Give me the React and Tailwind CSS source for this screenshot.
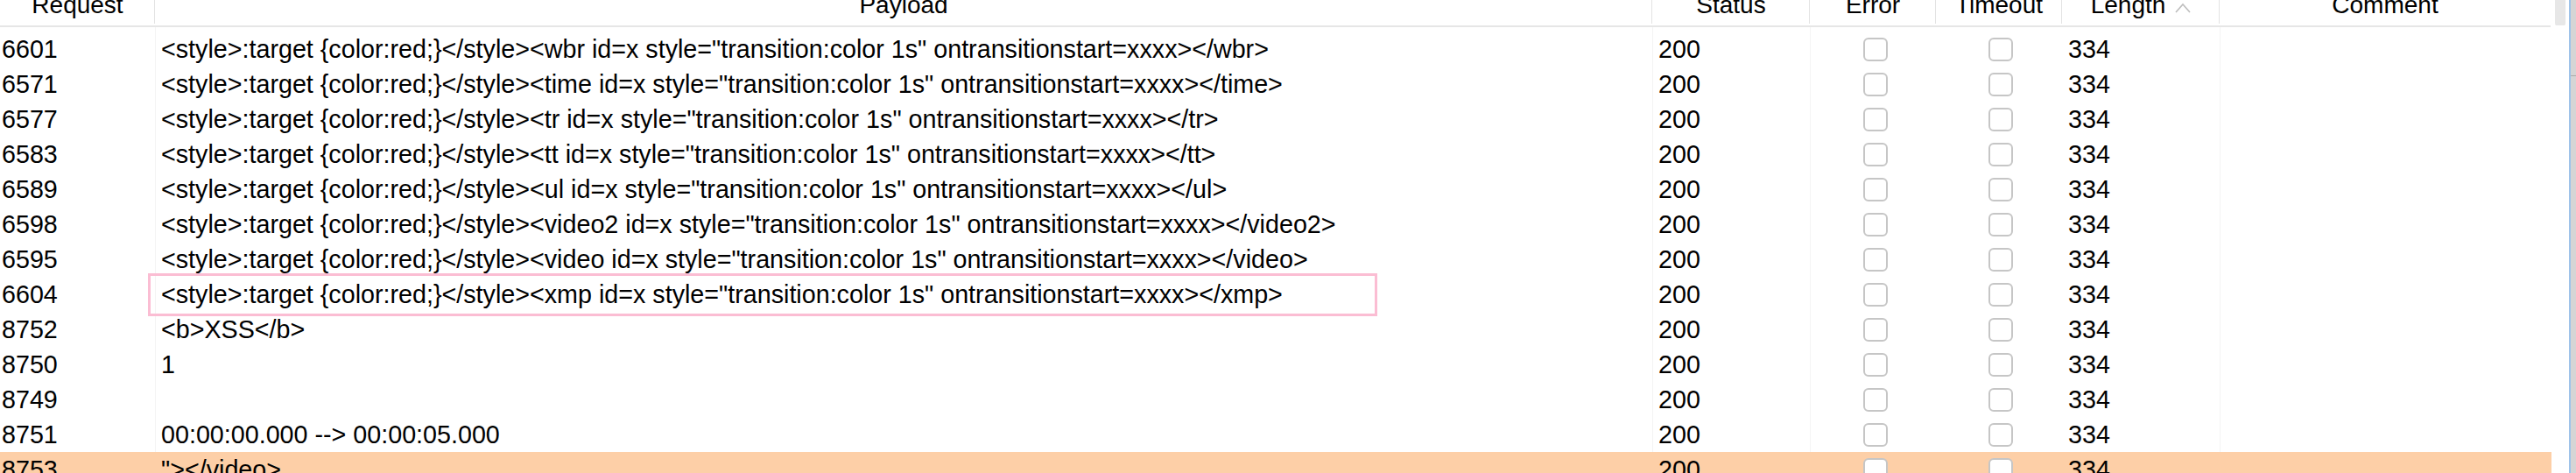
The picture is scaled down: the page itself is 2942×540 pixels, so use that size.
import React from "react";

const P = (tag) =>
  `<style>:target {color:red;}</style><${tag} id=x style="transition:color 1s" ontransitionstart=xxxx></${tag}>`;

const rows = [
  ["6601", P("wbr")],
  ["6571", P("time")],
  ["6577", P("tr")],
  ["6583", P("tt")],
  ["6589", P("ul")],
  ["6598", P("video2")],
  ["6595", P("video")],
  ["6604", P("xmp")],
  ["8752", "<b>XSS</b>"],
  ["8750", "1"],
  ["8749", ""],
  ["8751", "00:00:00.000 --> 00:00:05.000"],
  ["8753", '"></video>'],
];

function Box() {
  return (
    <div className="w-[28px] h-[27px] rounded-[6px] border-2 border-[#c6c6c6] bg-white" />
  );
}

function HeadCell({ w, children, last }) {
  return (
    <div className={`${w} h-[29px] relative flex justify-center shrink-0`}>
      <div className="-mt-[8px] leading-[28px] flex items-start">{children}</div>
      {!last && <div className="absolute right-0 top-0 h-[27px] w-px bg-[#e3e3e3]" />}
    </div>
  );
}

export default function App() {
  return (
    <div
      className="w-[2942px] h-[540px] overflow-hidden bg-white flex text-black"
      style={{ fontFamily: '"Liberation Sans", Arial, sans-serif' }}
    >
      <div className="w-[2934px] h-full relative flex flex-col shrink-0">
        {/* header */}
        <div className="flex h-[29px] shrink-0 overflow-hidden text-[28px]">
          <HeadCell w="w-[177px]">Request</HeadCell>
          <HeadCell w="w-[1710px]">Payload</HeadCell>
          <HeadCell w="w-[180px]">Status</HeadCell>
          <HeadCell w="w-[144px]">Error</HeadCell>
          <HeadCell w="w-[144px]">Timeout</HeadCell>
          <HeadCell w="w-[180px]">
            <span>Length</span>
            <svg width="18" height="12" viewBox="0 0 18 12" className="ml-[11px] mt-[11px]" fill="none">
              <polyline points="1,11 9,2 17,11" stroke="#bdbdbd" strokeWidth="1.6" />
            </svg>
          </HeadCell>
          <HeadCell w="w-[378px]" last>Comment</HeadCell>
          <div className="w-[21px] shrink-0 h-[29px]">
            <div className="ml-[5px] w-[12px] h-[32px] rounded-b-full bg-[#e7e7e7] relative z-10" />
          </div>
        </div>
        <div className="w-[2913px] h-[2px] shrink-0 bg-[#e6e6e6]" />
        {/* body */}
        <div className="relative shrink-0 pt-[5px] text-[28.7px]">
          <div className="absolute left-[177px] top-0 bottom-0 w-px bg-[#f4f4f4]" />
          <div className="absolute left-[1887px] top-0 bottom-0 w-px bg-[#f4f4f4]" />
          <div className="absolute left-[2067px] top-0 bottom-0 w-px bg-[#f4f4f4]" />
          <div className="absolute left-[2535px] top-0 bottom-0 w-px bg-[#f4f4f4]" />
          {rows.map(([id, payload], i) => (
            <div
              key={id}
              className={`relative flex h-[40px] shrink-0 items-center w-[2914px] leading-[40px] ${
                i === rows.length - 1 ? "bg-[#fdcfa7]" : ""
              }`}
            >
              <div className="w-[177px] shrink-0 pl-[2px]">{id}</div>
              <div className="w-[1710px] shrink-0 pl-[7px] whitespace-pre overflow-hidden">{payload}</div>
              <div className="w-[180px] shrink-0 pl-[7px]">200</div>
              <div className="w-[144px] shrink-0 flex justify-center pl-[6px]">
                <Box />
              </div>
              <div className="w-[144px] shrink-0 flex justify-center pl-[4px]">
                <Box />
              </div>
              <div className="w-[180px] shrink-0 pl-[7px]">334</div>
              <div className="flex-1" />
            </div>
          ))}
        </div>
        {/* highlight annotation */}
        <div className="absolute left-[169px] top-[312px] w-[1404px] h-[49px] border-[3px] border-[#fbbdd3] pointer-events-none" />
      </div>
      <div className="w-[2px] h-full shrink-0 bg-[#9ec3ea]" />
      <div className="flex-1 h-full bg-[#d5d5d5] relative">
        <div className="absolute left-0 right-0 top-[86px] h-px bg-[#aaaaaa]" />
      </div>
    </div>
  );
}
